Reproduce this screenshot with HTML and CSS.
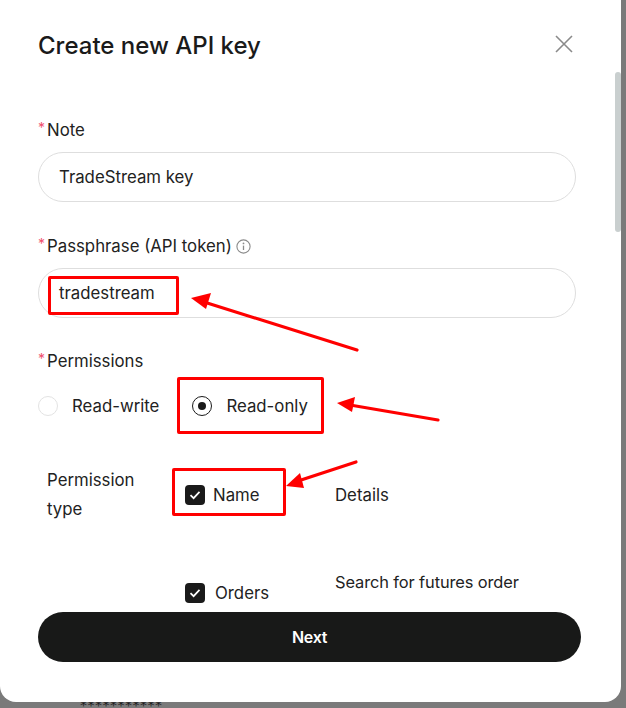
FILE: index.html
```html
<!DOCTYPE html>
<html lang="en">
<head>
<meta charset="utf-8">
<title>Create new API key</title>
<link rel="stylesheet" href="styles.css">
</head>
<body>
<div class="backdrop-text">***********</div>
<div class="modal">
  <div class="scrollbar"></div>
  <div class="header">
    <h1 class="title">Create new API key</h1>
    <svg class="close" width="18" height="18" viewBox="0 0 18 18"><path d="M1 1L17 17M17 1L1 17" stroke="#8a8a8a" stroke-width="1.6" fill="none"/></svg>
  </div>

  <div class="label label-note"><span class="req">*</span>Note</div>
  <div class="input">TradeStream key</div>

  <div class="label label-pass"><span class="req">*</span>Passphrase (API token)
    <svg class="info" width="15" height="15" viewBox="0 0 15 15"><circle cx="7.5" cy="7.5" r="6.6" stroke="#8a8a8a" stroke-width="1.1" fill="none"/><circle cx="7.5" cy="4.4" r="0.9" fill="#8a8a8a"/><path d="M7.5 6.6V11" stroke="#8a8a8a" stroke-width="1.3"/></svg>
  </div>
  <div class="input">tradestream</div>

  <div class="label label-perm"><span class="req">*</span>Permissions</div>
  <div class="radios">
    <div class="radio"><span class="circle"></span><span>Read-write</span></div>
    <div class="radio radio-on"><span class="circle"><span class="dot"></span></span><span>Read-only</span></div>
  </div>

  <div class="ptable">
    <div class="prow prow-1">
      <div class="pcol1">Permission<br>type</div>
      <div class="pcol2"><span class="check"><svg width="12" height="10" viewBox="0 0 12 10"><path d="M1.5 5.2L4.6 8.2L10.5 1.8" stroke="#fff" stroke-width="1.7" fill="none"/></svg></span><span>Name</span></div>
      <div class="pcol3">Details</div>
    </div>
    <div class="prow prow-2">
      <div class="pcol1"></div>
      <div class="pcol2 pcol2-low"><span class="check"><svg width="12" height="10" viewBox="0 0 12 10"><path d="M1.5 5.2L4.6 8.2L10.5 1.8" stroke="#fff" stroke-width="1.7" fill="none"/></svg></span><span class="orders">Orders</span></div>
      <div class="pcol3 pcol3-search">Search for futures order</div>
    </div>
  </div>

  <button class="next">Next</button>

  <div class="mark mark-pass"></div>
  <div class="mark mark-radio"></div>
  <div class="mark mark-name"></div>
  <svg class="arrows" width="621" height="702" viewBox="0 0 621 702">
    <g stroke="#f00" stroke-width="3.2" stroke-linecap="round" fill="none">
      <path d="M357 350L204 302"/>
      <path d="M438 420L350 405"/>
      <path d="M356 462L298 481"/>
    </g>
    <g fill="#f00">
      <path d="M191 298L211 293L206 309Z"/>
      <path d="M337 403L355 397L352 412Z"/>
      <path d="M286 486L300 473L304 488Z"/>
    </g>
  </svg>
</div>
</body>
</html>
```
FILE: styles.css
```css
* { box-sizing: border-box; }
html, body { margin: 0; padding: 0; }
body {
  width: 626px;
  height: 708px;
  background: #7a7a7a;
  overflow: hidden;
  position: relative;
  font-family: Inter, "Noto Sans", sans-serif;
  color: #1e1e1e;
}
.backdrop-text {
  position: absolute;
  left: 80px;
  top: 697px;
  font-size: 14px;
  letter-spacing: 0.5px;
  color: #1e1e1e;
  font-family: "DejaVu Sans", sans-serif;
}
.modal {
  position: relative;
  width: 621px;
  height: 702px;
  background: #fff;
  border-radius: 0 0 16px 16px;
  padding: 30px 0 0 38px;
  overflow: hidden;
}
.scrollbar {
  position: absolute;
  right: 0;
  top: 72px;
  width: 6px;
  height: 160px;
  background: #c9cfcf;
  border-radius: 3px;
}
.header {
  display: flex;
  align-items: center;
  justify-content: space-between;
  width: 535px;
  height: 32px;
}
.title {
  margin: 0;
  font-size: 24px;
  line-height: 32px;
  font-weight: 500;
  letter-spacing: 0;
  color: #1a1a1a;
}
.close { margin-top: -4px; }
.label {
  font-size: 16.8px;
  line-height: 20px;
  color: #222;
  display: flex;
  align-items: center;
}
.req {
  color: #f0506e;
  font-size: 14px;
  width: 9px;
  align-self: flex-start;
  line-height: 16px;
}
.label-note { margin-top: 58px; }
.label-pass { margin-top: 34px; }
.label-perm { margin-top: 33px; }
.info { margin-left: 4px; }
.input {
  margin-top: 12px;
  width: 538px;
  height: 50px;
  border: 1px solid #dedede;
  border-radius: 25px;
  padding-left: 20px;
  display: flex;
  align-items: center;
  font-size: 16.8px;
  color: #222;
}
.radios {
  margin-top: 25px;
  display: flex;
  align-items: center;
  height: 20px;
}
.radio {
  display: flex;
  align-items: center;
  gap: 14px;
  font-size: 16.8px;
  color: #222;
}
.radio + .radio { margin-left: 33px; }
.circle {
  width: 20px;
  height: 20px;
  border-radius: 50%;
  border: 1px solid #e3e3e3;
  display: flex;
  align-items: center;
  justify-content: center;
}
.radio-on .circle { border: 1.5px solid #1a1a1a; }
.dot {
  width: 8px;
  height: 8px;
  border-radius: 50%;
  background: #1a1a1a;
}
.ptable {
  margin-top: 50px;
  padding-left: 9px;
}
.prow {
  display: flex;
  font-size: 16.8px;
  color: #222;
}
.prow-1 { align-items: center; height: 58px; }
.prow-2 { margin-top: 46px; align-items: flex-start; height: 40px; }
.pcol1 { width: 138px; line-height: 29px; }
.pcol2 {
  width: 150px;
  display: flex;
  align-items: center;
  gap: 8px;
}
.pcol2-low { margin-top: 13px; }
.orders { margin-left: 2px; }
.pcol3 { line-height: 24px; }
.pcol3-search { font-size: 16.4px; letter-spacing: -0.1px; }
.check {
  width: 20px;
  height: 20px;
  border-radius: 4px;
  background: #1a1a1a;
  display: flex;
  align-items: center;
  justify-content: center;
}
.next {
  position: absolute;
  left: 38px;
  top: 612px;
  width: 543px;
  height: 50px;
  border: none;
  border-radius: 25px;
  background: #181918;
  color: #fff;
  font-family: Inter, "Noto Sans", sans-serif;
  font-size: 16px;
  font-weight: 600;
  letter-spacing: -0.3px;
}
.mark {
  position: absolute;
  border: 3px solid #f00;
  border-radius: 2px;
}
.mark-pass { left: 48px; top: 276px; width: 131px; height: 39px; }
.mark-radio { left: 177px; top: 377px; width: 147px; height: 57px; }
.mark-name { left: 172px; top: 468px; width: 114px; height: 48px; }
.arrows { position: absolute; left: 0; top: 0; pointer-events: none; }
```
